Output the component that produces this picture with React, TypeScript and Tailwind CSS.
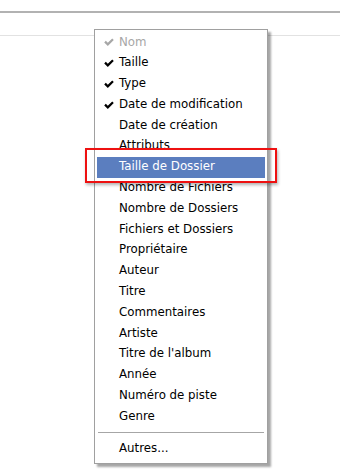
import React from 'react';

type Item = { label: string; checked?: boolean; disabled?: boolean; active?: boolean };

const items: Item[] = [
  { label: 'Nom', checked: true, disabled: true },
  { label: 'Taille', checked: true },
  { label: 'Type', checked: true },
  { label: 'Date de modification', checked: true },
  { label: 'Date de création' },
  { label: 'Attributs' },
  { label: 'Taille de Dossier', active: true },
  { label: 'Nombre de Fichiers' },
  { label: 'Nombre de Dossiers' },
  { label: 'Fichiers et Dossiers' },
  { label: 'Propriétaire' },
  { label: 'Auteur' },
  { label: 'Titre' },
  { label: 'Commentaires' },
  { label: 'Artiste' },
  { label: "Titre de l'album" },
  { label: 'Année' },
  { label: 'Numéro de piste' },
  { label: 'Genre' },
];

const Check = ({ color }: { color: string }) => (
  <svg width="10" height="8" viewBox="0 0 10 8" className="shrink-0">
    <path d="M1 3.6 L3.8 6.4 L9 1.2" fill="none" stroke={color} strokeWidth="2.2" />
  </svg>
);

const MenuRow = ({ item }: { item: Item }) => {
  const text = item.disabled ? 'text-[#a7a7a7]' : item.active ? 'text-white' : 'text-black';
  return (
    <div className={`flex h-[20.8px] items-center ${item.active ? 'bg-[#5b7ebf]' : ''}`}>
      <div className="flex w-[22px] justify-end pr-[5px]">
        {item.checked && <Check color={item.disabled ? '#a7a7a7' : '#000'} />}
      </div>
      <span className={`${text} text-[11.8px] leading-none`}>{item.label}</span>
    </div>
  );
};

export default function App() {
  return (
    <div
      className="relative h-[476px] w-[340px] overflow-hidden bg-white"
      style={{ fontFamily: '"DejaVu Sans", Tahoma, sans-serif' }}
    >
      <div className="pt-[11px]">
        <div className="h-[2px] bg-[#b2b2b2]" />
        <div className="mt-[22px] h-[1px] bg-[#e2e2e2]" />
      </div>

      {/* context menu */}
      <div className="absolute left-[94px] top-[29px] w-[174px] border border-[#a0a0a0] bg-white px-[2px] pb-[4px] pt-[2px] shadow-[3px_3px_2px_rgba(0,0,0,0.35)]">
        {items.map((it) => (
          <MenuRow key={it.label} item={it} />
        ))}
        <div className="flex h-[11.3px] items-center px-[1px]">
          <div className="h-[1px] w-full bg-[#a6a6a6]" />
        </div>
        <MenuRow item={{ label: 'Autres...' }} />
      </div>

      {/* red highlight frame */}
      <div className="absolute left-[85px] top-[148px] h-[35px] w-[192px] border-[2.5px] border-[#ee1111] shadow-[1px_2px_3px_rgba(0,0,0,0.3)]" />
    </div>
  );
}
